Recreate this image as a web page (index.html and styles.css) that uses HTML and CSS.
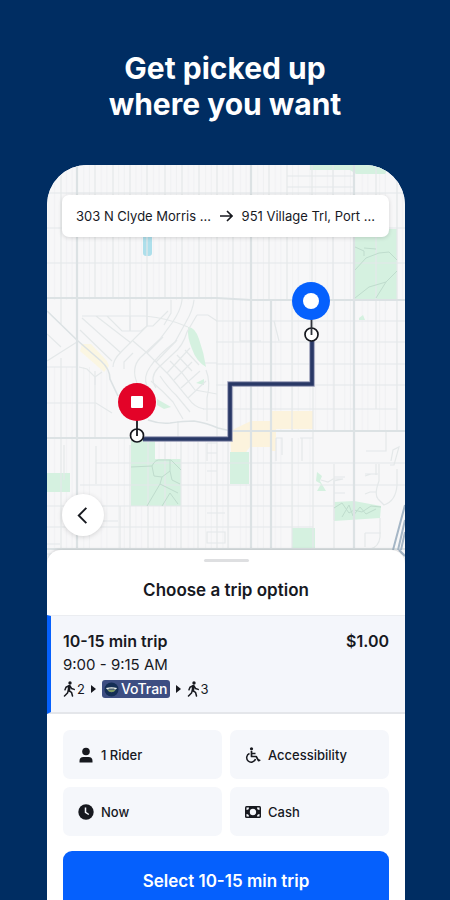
FILE: index.html
```html
<!DOCTYPE html>
<html lang="en">

<head>
  <meta charset="UTF-8" />
  <meta name="viewport" content="width=device-width, initial-scale=1.0" />
  <title>Get picked up where you want</title>
  <link rel="stylesheet" href="styles.css">
</head>

<body>

  <h1 class="headline">Get picked up<br>where you want</h1>

  <main class="phone">
    <section class="map">
      <svg class="map-art" viewBox="47 165 358 400" preserveAspectRatio="xMidYMin slice" aria-hidden="true">
        <defs>
          <pattern id="blocks" x="61" y="165" width="17.4" height="400" patternUnits="userSpaceOnUse">
            <path d="M5.5 0V400M11 0V400" stroke="#f0f1f2" stroke-width="1" />
          </pattern>
        </defs>
        <rect x="47" y="165" width="358" height="400" fill="#f7f7f8" />
        <rect x="47" y="165" width="358" height="135" fill="url(#blocks)" />
        <rect x="216" y="300" width="181" height="131" fill="url(#blocks)" />
        <rect x="47" y="438" width="266" height="127" fill="url(#blocks)" />
        <rect x="47" y="367" width="64" height="71" fill="url(#blocks)" />

        <!-- parks, water and shops -->
        <g fill="#d5f1e0">
          <path d="M310 165H390L385 174H356L350 170H310Z" />
          <path d="M355 229H397V299H355Z" />
          <path d="M131 439H155V459H181V506H131Z" />
          <path d="M47 473H70V492H47Z" />
          <path d="M230 452H249V484H230Z" />
          <path d="M292 528H315V549H292Z" />
          <path d="M334 502L354 501L381 506L380 518L334 521Z" />
          <path d="M188 327Q195 327 199 339Q204 353 206 367Q196 361 192 349Q187 337 188 327Z" />
          <path d="M204 379V385L196 383Z" />
          <path d="M317 472L322 476L320 481L326 491H317L321 484L316 481Z" />
          <path d="M157 399L171 407L164 409L157 405Z" />
          <path d="M359 318L363 315L365 320H359Z" />
        </g>
        <rect x="143" y="232" width="9" height="24" rx="3" fill="#addfeb" />
        <path d="M82 344L91 344L107 361L109 366L104 372L80 351Z" fill="#fbf6e2" />
        <path d="M230 431L251 421H271V411H313V429H276V451H271V447H250L246 452H231Z" fill="#fcf3dd" />

        <!-- side streets -->
        <g fill="none" stroke="#e4e8e9" stroke-width="1.2">
          <path d="M61 165V324M95 165V298M113 165V298M130 165V331M147 165V326M165 165V298M182 165V300M199 165V298M217 165V321M233 165V300M269 165V300M287 165V300M312 165V300M333 165V300M376 165V409M397 165V431" />
          <path d="M47 193H405M47 228H405M47 263H405M287 176H354M287 187H354M216 321H405M216 342H405M216 364H405M216 385H405M216 409H397" />
          <path d="M61 358V550M95 371V438M130 445V550M148 438V550M165 438V550M181 438V550M198 438V550M217 321V438M217 438V550M228 438V550M233 300V431M292 300V431M292 438V550M313 300V550M334 300V431M334 464V550M376 464V475" />
          <path d="M47 403H96L112 413M47 367H77M96 463H405M80 485H405M47 506H334M47 527H313M47 544H60M205 363H217M203 409H217" />
          <path d="M82 316H145Q168 318 188 327M107 316L122 331H141L147 326V300M130 331V316M82 318L121 353M80 330L112 361M96 316L131 343M47 334L61 347M47 361L77 342M79 367L87 369L95 377L102 372M95 377V385" />
          <path d="M194 300Q193 310 186 322L175 342Q158 355 150 367Q143 377 147 386M182 300Q181 310 172 323L160 339L140 358Q131 368 137 383M171 300V313L164 325M197 315L187 332Q183 346 173 354L158 368Q149 378 156 388" />
          <path d="M113 367Q113 360 121 352L147 326H153L168 311M124 369L124 362L133 353M197 315H208L217 321M133 341L147 353L169 375L188 398Q195 408 204 409" />
          <path d="M147 353L163 337M156 362L177 340M167 373L190 348M174 380L192 362M181 388L200 371M188 398L206 381M170 361L182 373L195 390L217 394M177 355L192 371M185 350L199 365M160 376Q168 388 176 395L190 412M151 381Q163 391 173 402L183 419M206 370Q211 382 207 398V421M178 421V438" />
          <path d="M64 445V480M96 446V484M120 506V550M82 521H118M207 443V461M207 443H217M207 453H217M207 471H217M207 513H225M207 532H225V543H207ZM276 438V461M276 438H282V455M300 438H313M302 438V461M366 451H386V431M47 554H405M240 322V341H261M274 321L279 341" />
          <path d="M321 480L328 482L333 479H343L334 481V520M334 477H345M334 493H345M379 464V481Q374 494 378 499L384 505Q396 501 397 485V469M365 474H378M365 476L371 474M365 494L370 492H377M391 461L393 450L399 447L394 465H390M380 518V537Q379 547 370 549M365 533H381M365 533V547" />
        </g>

        <!-- park paths -->
        <g fill="none" stroke="#bfdccd" stroke-width="1">
          <path d="M131 467L152 466Q155 459 161 460L171 460L181 470M152 466L154 476L162 477L170 471L172 480L180 484M162 477L160 484L147 506M160 484L178 493M170 493L162 506M170 493L178 504M170 460V471" />
          <path d="M355 270L366 258L379 253L389 252L397 260M355 247L364 251V256M364 248L376 249M355 298L369 287L386 282L397 271M376 298L386 282M334 508L342 503L349 513L354 510L362 512L371 506L381 507M342 517L349 505L353 516L360 507L366 514L376 509" />
        </g>

        <!-- main roads -->
        <g fill="none" stroke="#dce2e4" stroke-width="2.2">
          <path d="M77 165V565M251 165V565M354 165V565M271 300V550M47 298H217L251 300H405M47 438H130M230 431H405M47 549H405" />
          <path d="M47 311L78 341L101 361Q110 369 110 379L118 396M148 420Q159 424 170 423Q184 421 194 421Q207 423 218 428L231 431" stroke-width="1.6" />
        </g>
        <path d="M405 505L393 550M405 520L398 550M405 532L401 550M399 550L405 556" stroke="#a5b6c6" stroke-width="2" fill="none" />

        <!-- trip route -->
        <path d="M312 340V384H230V439H143" fill="none" stroke="#9296b3" stroke-width="5.4" />
        <path d="M312 340V384H230V439H143" fill="none" stroke="#293866" stroke-width="3.6" />

        <circle cx="311.500" cy="334.500" r="6.500" fill="#fff" stroke="#15171d" stroke-width="1.7" />
        <path d="M311.500 318V335" stroke="#30343c" stroke-width="1.8" />
        <circle cx="311" cy="301" r="19" fill="#0560fd" />
        <circle cx="311" cy="301" r="8" fill="#fff" />

        <circle cx="137" cy="435.500" r="6.500" fill="#fff" stroke="#15171d" stroke-width="1.7" />
        <path d="M137 419V436" stroke="#15171d" stroke-width="1.8" />
        <circle cx="137" cy="402" r="19" fill="#e30328" />
        <rect x="131" y="396" width="12" height="12" rx="1" fill="#fff" />
      </svg>

      <button class="route-bar" type="button">
        <span>303 N Clyde Morris ...</span>
        <svg class="route-arrow" viewBox="0 0 14 14" aria-hidden="true">
          <path d="M1 7H13M8 2L13 7L8 12" fill="none" stroke="currentColor" stroke-width="1.6" />
        </svg>
        <span>951 Village Trl, Port ...</span>
      </button>

      <button class="back-button" type="button" aria-label="Back">
        <svg viewBox="0 0 20 20" aria-hidden="true">
          <path d="M13 2L5 10L13 18" fill="none" stroke="currentColor" stroke-width="2" />
        </svg>
      </button>
    </section>

    <section class="sheet">
      <div class="handle"></div>
      <h2 class="sheet-title">Choose a trip option</h2>

      <button class="trip" type="button">
        <span class="trip-head"><span>10-15 min trip</span><span>$1.00</span></span>
        <span class="trip-time">9:00 - 9:15 AM</span>
        <span class="trip-legs">
          <svg class="walk" viewBox="0 0 12 16" aria-hidden="true">
            <circle cx="7" cy="2" r="1.700" fill="currentColor" />
            <path d="M6.500 4.500L5.500 10M6 4.800L3 6.200L2 8.800M7 5L8.500 7.500L11.200 8.400M5.500 9.500L8.500 11.300L9.500 15M5.300 9.500L4.500 12L1.500 15" fill="none" stroke="currentColor" stroke-width="1.500" stroke-linecap="round" stroke-linejoin="round" />
            <path d="M5 4.500L7.500 4.500L7.200 10L4.600 9.500Z" fill="currentColor" />
          </svg>
          <span>2</span>
          <svg class="next" viewBox="0 0 5 8" aria-hidden="true"><path d="M0 0L5 4L0 8Z" fill="currentColor" /></svg>
          <span class="line-tag">
            <svg viewBox="0 0 16 16" aria-hidden="true">
              <circle cx="8" cy="8" r="7.500" fill="#142e55" />
              <path d="M2 6.500Q8 4.800 14 6.500L12.500 8H3.500Z" fill="#eef2e9" />
              <path d="M3.500 8.200H12.500Q11 11 8 11Q5 11 3.500 8.200Z" fill="#7f9b62" />
              <path d="M5 7.500H11" stroke="#243c54" stroke-width="1" />
            </svg>
            VoTran
          </span>
          <svg class="next" viewBox="0 0 5 8" aria-hidden="true"><path d="M0 0L5 4L0 8Z" fill="currentColor" /></svg>
          <svg class="walk" viewBox="0 0 12 16" aria-hidden="true">
            <circle cx="7" cy="2" r="1.700" fill="currentColor" />
            <path d="M6.500 4.500L5.500 10M6 4.800L3 6.200L2 8.800M7 5L8.500 7.500L11.200 8.400M5.500 9.500L8.500 11.300L9.500 15M5.300 9.500L4.500 12L1.500 15" fill="none" stroke="currentColor" stroke-width="1.500" stroke-linecap="round" stroke-linejoin="round" />
            <path d="M5 4.500L7.500 4.500L7.200 10L4.600 9.500Z" fill="currentColor" />
          </svg>
          <span>3</span>
        </span>
      </button>

      <div class="options">
        <button class="option" type="button">
          <svg viewBox="0 0 16 16" aria-hidden="true">
            <circle cx="8" cy="4.500" r="3.800" fill="currentColor" />
            <path d="M1.500 15.500V14Q1.500 10 5.500 10H10.500Q14.500 10 14.500 14V15.500Z" fill="currentColor" />
          </svg>
          1 Rider
        </button>
        <button class="option" type="button">
          <svg viewBox="0 0 16 16" aria-hidden="true">
            <circle cx="6.500" cy="1.800" r="1.600" fill="currentColor" />
            <path d="M6.500 4V9.500H11.200L13.500 13.700L15.300 13M6.800 6.500H10.500" fill="none" stroke="currentColor" stroke-width="1.700" stroke-linejoin="round" />
            <path d="M4.500 6.500A4.500 4.500 0 1 0 10.500 12" fill="none" stroke="currentColor" stroke-width="1.500" />
          </svg>
          Accessibility
        </button>
        <button class="option" type="button">
          <svg viewBox="0 0 16 16" aria-hidden="true">
            <circle cx="8" cy="8" r="7.700" fill="currentColor" />
            <path d="M7.500 3.500V8.300L10.800 10.500" fill="none" stroke="#f5f7fb" stroke-width="1.500" />
          </svg>
          Now
        </button>
        <button class="option" type="button">
          <svg viewBox="0 0 16 16" aria-hidden="true">
            <rect x="0" y="2" width="16" height="12" rx="1.500" fill="currentColor" />
            <circle cx="8" cy="8" r="3.200" fill="#f5f7fb" />
            <path d="M1.500 6V3.500H4Q4 6 1.500 6ZM12 3.500H14.500V6Q12 6 12 3.500ZM1.500 10Q4 10 4 12.500H1.500ZM14.500 10V12.500H12Q12 10 14.500 10Z" fill="#f5f7fb" />
          </svg>
          Cash
        </button>
      </div>

      <button class="select-button" type="button">Select 10-15 min trip</button>
    </section>
  </main>

</body>

</html>
```

FILE: styles.css
```css
* {
  box-sizing: border-box;
}

body {
  height: 100vh;
  margin: 0;
  overflow: hidden;
  background-color: #002d62;
  color: #17191f;
  font-family: Inter, "Liberation Sans", sans-serif;
}

button {
  border: none;
  color: inherit;
  font-family: inherit;
  cursor: pointer;
}

.headline {
  margin: 0;
  padding: 50px 0 43px;
  color: white;
  font-size: 30px;
  font-weight: 700;
  line-height: 36px;
  text-align: center;
}

.phone {
  margin: 0 45px 0 47px;
  overflow: hidden;
  background-color: white;
  border-radius: 40px 40px 0 0;
}

.map {
  position: relative;
  height: 400px;
}

.map-art {
  display: block;
  width: 100%;
  height: 100%;
}

.route-bar {
  position: absolute;
  top: 30px;
  left: 15px;
  right: 16px;
  display: flex;
  align-items: center;
  justify-content: space-between;
  height: 42px;
  padding: 0 14px;
  background-color: white;
  border-radius: 7px;
  box-shadow: 0 1px 4px rgba(0, 0, 0, 0.15);
  font-size: 13px;
  white-space: nowrap;
}

.route-arrow {
  width: 14px;
  height: 14px;
}

.back-button {
  position: absolute;
  left: 15px;
  bottom: 29px;
  display: flex;
  align-items: center;
  justify-content: center;
  width: 42px;
  height: 42px;
  padding: 0;
  background-color: white;
  border-radius: 50%;
  box-shadow: 0 1px 5px rgba(0, 0, 0, 0.15);
}

.back-button svg {
  width: 19px;
  height: 19px;
}

.sheet {
  position: relative;
  margin-top: -15px;
  padding-top: 9px;
  background-color: white;
  border-radius: 14px 14px 0 0;
  box-shadow: 0 -1px 3px rgba(0, 0, 0, 0.12);
}

.handle {
  width: 45px;
  height: 3px;
  margin: 0 auto;
  background-color: #dedfe1;
  border-radius: 2px;
}

.sheet-title {
  margin: 0;
  padding: 16px 0 13px;
  font-size: 17px;
  font-weight: 600;
  line-height: 24px;
  text-align: center;
}

.trip {
  display: flex;
  flex-direction: column;
  width: 100%;
  padding: 13px 16px 11px 12px;
  background-color: #f4f6fb;
  border-top: 1px solid #ebedf1;
  border-bottom: 2px solid #e4e6ea;
  border-left: 4px solid #0560fd;
  font-size: 15px;
  line-height: 24px;
  text-align: left;
}

.trip-head {
  display: flex;
  justify-content: space-between;
  font-size: 16px;
  font-weight: 600;
}

.trip-legs {
  display: flex;
  align-items: center;
  gap: 6px;
  font-size: 13px;
}

.walk {
  width: 12px;
  height: 16px;
  margin-right: -4px;
}

.next {
  width: 5px;
  height: 8px;
}

.line-tag {
  display: flex;
  align-items: center;
  gap: 2px;
  height: 18px;
  padding: 0 2px;
  background-color: #3d4e82;
  border-radius: 3px;
  color: white;
  font-size: 14px;
  font-weight: 500;
}

.line-tag svg {
  width: 15px;
  height: 15px;
}

.options {
  display: grid;
  grid-template-columns: 1fr 1fr;
  gap: 8px;
  padding: 16px 16px 15px;
}

.option {
  display: flex;
  align-items: center;
  gap: 7px;
  height: 49px;
  padding: 0 15px;
  background-color: #f5f7fb;
  border-radius: 7px;
  font-size: 13px;
  font-weight: 500;
}

.option svg {
  width: 16px;
  height: 16px;
}

.select-button {
  display: block;
  width: calc(100% - 32px);
  height: 60px;
  margin: 0 16px;
  background-color: #0560fd;
  border-radius: 9px;
  color: white;
  font-size: 17px;
  font-weight: 600;
}
```
